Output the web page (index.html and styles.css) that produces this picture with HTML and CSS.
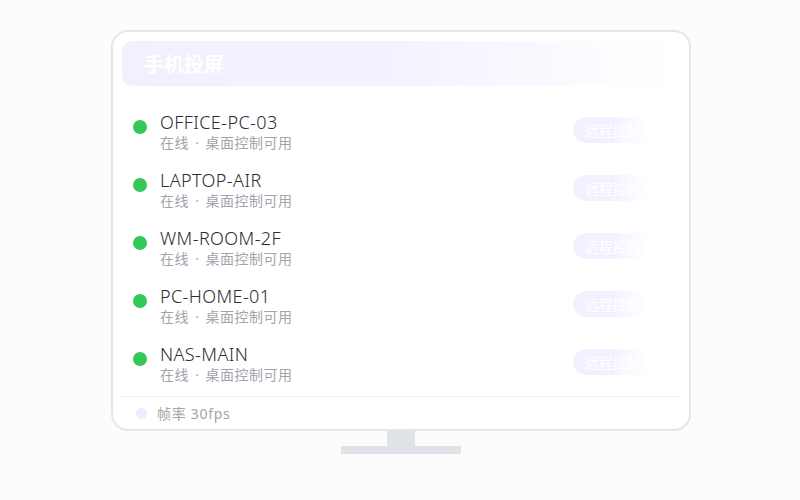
FILE: index.html
```html
<!DOCTYPE html>
<html lang="zh">
<head>
<meta charset="utf-8">
<title>手机投屏</title>
<link rel="stylesheet" href="styles.css">
</head>
<body>
<div class="stage">
  <div class="monitor">
    <div class="screen">
      <div class="header">手机投屏</div>
      <div class="list">
        <div class="row">
          <span class="dot"></span>
          <div class="info"><div class="name">OFFICE-PC-03</div><div class="sub">在线 · 桌面控制可用</div></div>
          <span class="btn">远程控制</span>
        </div>
        <div class="row">
          <span class="dot"></span>
          <div class="info"><div class="name">LAPTOP-AIR</div><div class="sub">在线 · 桌面控制可用</div></div>
          <span class="btn">远程控制</span>
        </div>
        <div class="row">
          <span class="dot"></span>
          <div class="info"><div class="name">WM-ROOM-2F</div><div class="sub">在线 · 桌面控制可用</div></div>
          <span class="btn">远程控制</span>
        </div>
        <div class="row">
          <span class="dot"></span>
          <div class="info"><div class="name">PC-HOME-01</div><div class="sub">在线 · 桌面控制可用</div></div>
          <span class="btn">远程控制</span>
        </div>
        <div class="row">
          <span class="dot"></span>
          <div class="info"><div class="name">NAS-MAIN</div><div class="sub">在线 · 桌面控制可用</div></div>
          <span class="btn">远程控制</span>
        </div>
      </div>
      <div class="footer"><span class="fdot"></span><span class="ftext">帧率 30fps</span></div>
    </div>
    <div class="neck"></div>
    <div class="base"></div>
  </div>
</div>
</body>
</html>
```
FILE: styles.css
```css
html, body {
  margin: 0;
  padding: 0;
}
body {
  background: #fcfcfd;
  width: 800px;
  height: 500px;
  font-family: "Noto Sans", "Noto Sans CJK SC", sans-serif;
  overflow: hidden;
}
.stage {
  display: flex;
  justify-content: flex-start;
  padding: 30px 0 0 111px;
}
.monitor {
  display: flex;
  flex-direction: column;
  align-items: center;
  width: 580px;
}
.screen {
  box-sizing: border-box;
  width: 580px;
  height: 401px;
  border: 2px solid #e4e6ea;
  border-radius: 17px;
  background: #ffffff;
  padding: 9px 11px 0 9px;
  display: flex;
  flex-direction: column;
}
.header {
  height: 45px;
  border-radius: 10px;
  background: linear-gradient(90deg, #f2efff 0%, #f4f1ff 45%, rgba(246,244,255,0) 100%);
  color: #ffffff;
  font-family: "Noto Sans CJK SC", sans-serif;
  font-weight: 700;
  font-size: 20px;
  line-height: 45px;
  padding-left: 22px;
}
.list {
  margin-top: 17px;
  display: flex;
  flex-direction: column;
}
.row {
  height: 58px;
  display: flex;
  align-items: center;
  padding-left: 11px;
}
.dot {
  width: 14px;
  height: 14px;
  border-radius: 50%;
  background: #34c759;
  margin-right: 13px;
  flex: none;
  position: relative;
  top: -5px;
}
.info {
  flex: 1;
  display: flex;
  flex-direction: column;
}
.name {
  font-size: 18px;
  font-weight: 300;
  line-height: 22px;
  color: #2a2d33;
  letter-spacing: 0.4px;
}
.sub {
  font-size: 14px;
  line-height: 20px;
  color: #a1a5ac;
  letter-spacing: 0.5px;
  word-spacing: 2px;
}
.btn {
  flex: none;
  height: 26px;
  line-height: 26px;
  border-radius: 13px;
  background: #f3f0ff;
  color: #ffffff;
  font-family: "Noto Sans CJK SC", sans-serif;
  font-size: 14px;
  padding: 0 12px;
  margin-right: 25px;
  position: relative;
  top: -2px;
  -webkit-mask-image: linear-gradient(90deg, #000 0%, #000 45%, rgba(0,0,0,0) 92%);
  mask-image: linear-gradient(90deg, #000 0%, #000 45%, rgba(0,0,0,0) 92%);
}
.footer {
  margin-top: 3px;
  border-top: 1px solid #eef0f2;
  height: 32px;
  display: flex;
  align-items: center;
  padding-left: 14px;
}
.fdot {
  width: 11px;
  height: 11px;
  border-radius: 50%;
  background: #efebff;
  margin-right: 10px;
}
.ftext {
  font-size: 14px;
  color: #a1a5ac;
  letter-spacing: 0.7px;
}
.neck {
  width: 28px;
  height: 15px;
  background: #dfe2e6;
}
.base {
  width: 120px;
  height: 8px;
  background: #dfe2e6;
}
```
